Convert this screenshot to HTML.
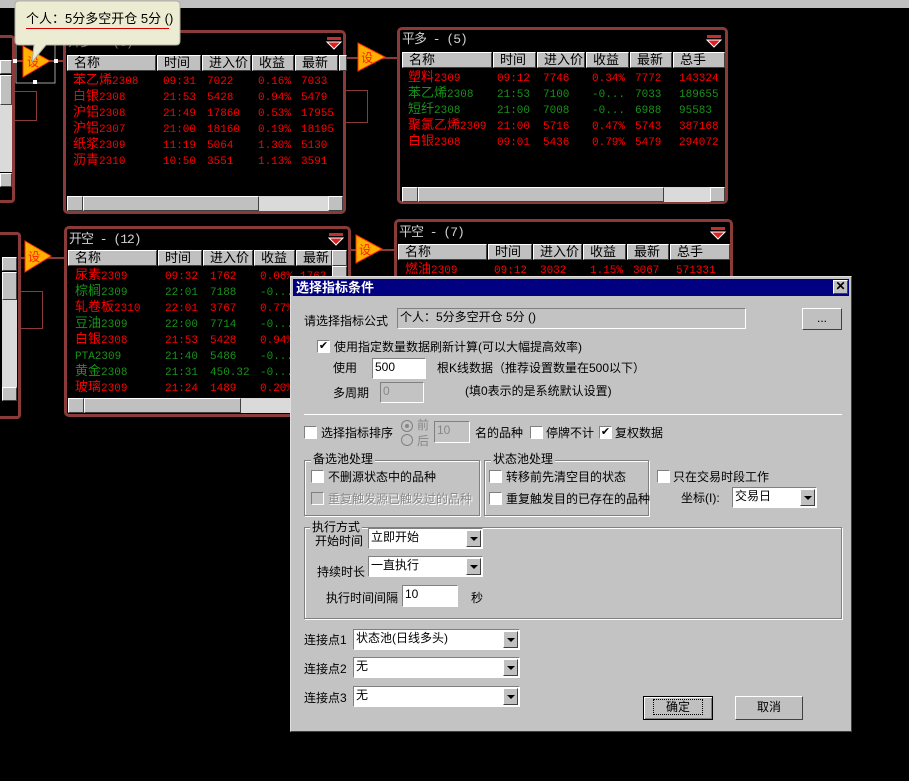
<!DOCTYPE html>
<html><head><meta charset="utf-8">
<style>
*{margin:0;padding:0;box-sizing:border-box}
body{width:909px;height:781px;background:#000;position:relative;overflow:hidden;font-family:"Liberation Sans","Noto Sans CJK SC",sans-serif;font-size:12px}
.a{position:absolute}
.pn{position:absolute;background:#000;border:3px solid #8b3a3a;border-radius:5px}
.tt{position:absolute;color:#d0d0d0;font-size:13px;line-height:16px;font-family:"Liberation Mono","Noto Sans CJK SC",monospace;letter-spacing:-1px}
.hc{position:absolute;height:16px;background:#c0c0c0;border-top:1px solid #fff;border-left:1px solid #fff;border-right:1px solid #404040;border-bottom:1px solid #404040;color:#000;font-size:13px;line-height:14px;padding-left:6px;overflow:hidden;white-space:nowrap}
.r{position:absolute;left:0;height:16px;width:100%;font-family:"Liberation Mono","Noto Sans CJK SC",monospace;font-size:11px;line-height:16px;white-space:nowrap}
.r span{position:absolute;top:3px;height:16px;display:flex;align-items:center}
.r b{font-weight:normal;font-size:13px;font-family:"Noto Sans CJK SC",sans-serif;line-height:16px;height:16px;position:relative;top:-3px}
.R{color:#ff0000}.G{color:#1a921a}
.hs{position:absolute;height:15px;background:#dadada}
.btn{position:absolute;background:#c0c0c0;border-top:1px solid #fff;border-left:1px solid #fff;border-right:1px solid #404040;border-bottom:1px solid #404040}
.lnk{position:absolute;background:#8b3a3a}
.dlg{position:absolute;left:290px;top:276px;width:562px;height:456px;background:#c3c3c3;border-top:1px solid #e0e0e0;border-left:1px solid #e0e0e0;border-right:1px solid #404040;border-bottom:1px solid #404040;font-family:"Liberation Sans","Noto Sans CJK SC",sans-serif;font-size:12px;color:#000}
.d{position:absolute;white-space:nowrap;line-height:14px}
.sk{position:absolute;border-top:1px solid #808080;border-left:1px solid #808080;border-right:1px solid #fff;border-bottom:1px solid #fff;background:#fff;line-height:16px;padding-left:2px;font-size:12px}
.cb{position:absolute;width:13px;height:13px;background:#fff;border-top:1px solid #808080;border-left:1px solid #808080;border-right:1px solid #fff;border-bottom:1px solid #fff;font-size:11px;line-height:11px;text-align:center}
.gb{position:absolute;border:1px solid #808080;box-shadow:1px 1px 0 #fff inset,1px 1px 0 #fff}
.gt{position:absolute;background:#c3c3c3;padding:0 2px;line-height:14px}
.dd{position:absolute;right:1px;top:1px;width:15px;bottom:1px;background:#c0c0c0;border-top:1px solid #fff;border-left:1px solid #fff;border-right:1px solid #404040;border-bottom:1px solid #404040}
.dd:after{content:"";position:absolute;left:3px;top:6px;border-left:4px solid transparent;border-right:4px solid transparent;border-top:4px solid #000}
</style></head><body>

<div class="a" style="left:0;top:0;width:909px;height:8px;background:#c0c0c0"></div>

<div class="a" style="left:0;top:35px;width:15px;height:168px;border-right:3px solid #8b3a3a;border-bottom:3px solid #8b3a3a;border-top:3px solid #8b3a3a;border-radius:0 4px 4px 0"></div>
<div class="btn" style="left:0;top:60px;width:12px;height:14px"></div>
<div class="btn" style="left:0;top:75px;width:12px;height:30px"></div>
<div class="a" style="left:0;top:105px;width:12px;height:67px;background:#dadada"></div>
<div class="btn" style="left:0;top:173px;width:12px;height:14px"></div>
<div class="lnk" style="left:15px;top:91px;width:22px;height:1px"></div><div class="lnk" style="left:36px;top:91px;width:1px;height:30px"></div><div class="lnk" style="left:15px;top:120px;width:22px;height:1px"></div>

<div class="a" style="left:0;top:232px;width:21px;height:187px;border-right:3px solid #8b3a3a;border-bottom:3px solid #8b3a3a;border-top:3px solid #8b3a3a;border-radius:0 4px 4px 0"></div>
<div class="btn" style="left:2px;top:257px;width:15px;height:14px"></div>
<div class="btn" style="left:2px;top:272px;width:15px;height:28px"></div>
<div class="a" style="left:2px;top:300px;width:15px;height:92px;background:#dadada"></div>
<div class="btn" style="left:2px;top:387px;width:15px;height:14px"></div>
<div class="lnk" style="left:21px;top:291px;width:22px;height:1px"></div><div class="lnk" style="left:42px;top:291px;width:1px;height:38px"></div><div class="lnk" style="left:21px;top:328px;width:22px;height:1px"></div>

<div class="lnk" style="left:345px;top:57px;width:52px;height:2px"></div>
<div class="lnk" style="left:345px;top:90px;width:23px;height:1px"></div><div class="lnk" style="left:367px;top:90px;width:1px;height:33px"></div><div class="lnk" style="left:345px;top:122px;width:23px;height:1px"></div>
<div class="lnk" style="left:351px;top:249px;width:44px;height:2px"></div>
<div class="lnk" style="left:12px;top:60px;width:52px;height:2px"></div>
<div class="lnk" style="left:18px;top:257px;width:47px;height:2px"></div>

<svg class="a" style="left:0;top:0" width="909" height="300">
 <g font-family="Noto Sans CJK SC" font-size="12" fill="#ff2000">
  <polygon points="23,46 50,61 23,77" fill="#ffb000" stroke="#ff3000" stroke-width="1"/><text x="27" y="66">设</text>
  <polygon points="358,43 385,57 358,71" fill="#ffb000" stroke="#ff3000" stroke-width="1"/><text x="361" y="62">设</text>
  <polygon points="25,241 51,256 25,272" fill="#ffb000" stroke="#ff3000" stroke-width="1"/><text x="28" y="261">设</text>
  <polygon points="356,235 382,249 356,263" fill="#ffb000" stroke="#ff3000" stroke-width="1"/><text x="359" y="254">设</text>
 </g>
 <rect x="16" y="39" width="39" height="44" fill="none" stroke="#a0a0a0"/>
 <rect x="13" y="59" width="4" height="4" fill="#fff"/><rect x="54" y="59" width="4" height="4" fill="#fff"/><rect x="33" y="80" width="4" height="4" fill="#fff"/>
</svg>

<!-- Panel 1 开多 -->
<div class="pn" style="left:63px;top:30px;width:283px;height:184px">
 <div class="tt" style="left:2px;top:2px;color:#707070">开多 - (6)</div>
 <div class="hc" style="left:1px;top:22px;width:89px">名称</div><div class="hc" style="left:91px;top:22px;width:44px">时间</div><div class="hc" style="left:136px;top:22px;width:49px">进入价</div><div class="hc" style="left:186px;top:22px;width:42px">收益</div><div class="hc" style="left:229px;top:22px;width:43px">最新</div><div class="hc" style="left:273px;top:22px;width:4px"></div>
 <div class="r R" style="top:38px"><span style="left:7px"><b>苯乙烯</b>2308</span><span style="left:97px">09:31</span><span style="left:141px">7022</span><span style="left:192px">0.16%</span><span style="left:235px">7033</span></div>
 <div class="r R" style="top:54px"><span style="left:7px"><b>白银</b>2308</span><span style="left:97px">21:53</span><span style="left:141px">5428</span><span style="left:192px">0.94%</span><span style="left:235px">5479</span></div>
 <div class="r R" style="top:70px"><span style="left:7px"><b>沪铝</b>2308</span><span style="left:97px">21:49</span><span style="left:141px">17860</span><span style="left:192px">0.53%</span><span style="left:235px">17955</span></div>
 <div class="r R" style="top:86px"><span style="left:7px"><b>沪铝</b>2307</span><span style="left:97px">21:00</span><span style="left:141px">18160</span><span style="left:192px">0.19%</span><span style="left:235px">18195</span></div>
 <div class="r R" style="top:102px"><span style="left:7px"><b>纸浆</b>2309</span><span style="left:97px">11:19</span><span style="left:141px">5064</span><span style="left:192px">1.30%</span><span style="left:235px">5130</span></div>
 <div class="r R" style="top:118px"><span style="left:7px"><b>沥青</b>2310</span><span style="left:97px">10:50</span><span style="left:141px">3551</span><span style="left:192px">1.13%</span><span style="left:235px">3591</span></div>
 <div class="hs" style="left:1px;top:163px;width:276px"></div>
 <div class="btn" style="left:1px;top:163px;width:16px;height:15px"></div><div class="btn" style="left:17px;top:163px;width:176px;height:15px"></div><div class="btn" style="left:262px;top:163px;width:15px;height:15px"></div>
</div>

<!-- Panel 2 平多 -->
<div class="pn" style="left:397px;top:27px;width:331px;height:177px">
 <div class="tt" style="left:2px;top:2px">平多 - (5)</div>
 <div class="hc" style="left:2px;top:22px;width:90px">名称</div><div class="hc" style="left:93px;top:22px;width:43px">时间</div><div class="hc" style="left:137px;top:22px;width:48px">进入价</div><div class="hc" style="left:186px;top:22px;width:43px">收益</div><div class="hc" style="left:230px;top:22px;width:42px">最新</div><div class="hc" style="left:273px;top:22px;width:52px">总手</div>
 <div class="r R" style="top:38px"><span style="left:8px"><b>塑料</b>2309</span><span style="left:97px">09:12</span><span style="left:143px">7746</span><span style="left:192px">0.34%</span><span style="left:235px">7772</span><span style="left:279px">143324</span></div>
 <div class="r G" style="top:54px"><span style="left:8px"><b>苯乙烯</b>2308</span><span style="left:97px">21:53</span><span style="left:143px">7100</span><span style="left:192px">-0...</span><span style="left:235px">7033</span><span style="left:279px">189655</span></div>
 <div class="r G" style="top:70px"><span style="left:8px"><b>短纤</b>2308</span><span style="left:97px">21:00</span><span style="left:143px">7008</span><span style="left:192px">-0...</span><span style="left:235px">6988</span><span style="left:279px">95583</span></div>
 <div class="r R" style="top:86px"><span style="left:8px"><b>聚氯乙烯</b>2309</span><span style="left:97px">21:00</span><span style="left:143px">5716</span><span style="left:192px">0.47%</span><span style="left:235px">5743</span><span style="left:279px">387168</span></div>
 <div class="r R" style="top:102px"><span style="left:8px"><b>白银</b>2308</span><span style="left:97px">09:01</span><span style="left:143px">5436</span><span style="left:192px">0.79%</span><span style="left:235px">5479</span><span style="left:279px">294072</span></div>
 <div class="hs" style="left:2px;top:157px;width:323px"></div>
 <div class="btn" style="left:2px;top:157px;width:16px;height:15px"></div><div class="btn" style="left:18px;top:157px;width:246px;height:15px"></div><div class="btn" style="left:310px;top:157px;width:15px;height:15px"></div>
</div>

<!-- Panel 3 开空 -->
<div class="pn" style="left:64px;top:226px;width:287px;height:191px">
 <div class="tt" style="left:2px;top:3px">开空 - (12)</div>
 <div class="hc" style="left:1px;top:21px;width:89px">名称</div><div class="hc" style="left:91px;top:21px;width:44px">时间</div><div class="hc" style="left:136px;top:21px;width:50px">进入价</div><div class="hc" style="left:187px;top:21px;width:41px">收益</div><div class="hc" style="left:229px;top:21px;width:36px">最新</div>
 <div class="r R" style="top:37px"><span style="left:8px"><b>尿素</b>2309</span><span style="left:98px">09:32</span><span style="left:143px">1762</span><span style="left:193px">0.06%</span><span style="left:233px">1763</span></div>
 <div class="r G" style="top:53px"><span style="left:8px"><b>棕榈</b>2309</span><span style="left:98px">22:01</span><span style="left:143px">7188</span><span style="left:193px">-0...</span></div>
 <div class="r R" style="top:69px"><span style="left:8px"><b>轧卷板</b>2310</span><span style="left:98px">22:01</span><span style="left:143px">3767</span><span style="left:193px">0.77%</span></div>
 <div class="r G" style="top:85px"><span style="left:8px"><b>豆油</b>2309</span><span style="left:98px">22:00</span><span style="left:143px">7714</span><span style="left:193px">-0...</span></div>
 <div class="r R" style="top:101px"><span style="left:8px"><b>白银</b>2308</span><span style="left:98px">21:53</span><span style="left:143px">5428</span><span style="left:193px">0.94%</span></div>
 <div class="r G" style="top:117px"><span style="left:8px">PTA2309</span><span style="left:98px">21:40</span><span style="left:143px">5486</span><span style="left:193px">-0...</span></div>
 <div class="r G" style="top:133px"><span style="left:8px"><b>黄金</b>2308</span><span style="left:98px">21:31</span><span style="left:143px">450.32</span><span style="left:193px">-0...</span></div>
 <div class="r R" style="top:149px"><span style="left:8px"><b>玻璃</b>2309</span><span style="left:98px">21:24</span><span style="left:143px">1489</span><span style="left:193px">0.20%</span></div>
 <div class="a" style="left:265px;top:21px;width:15px;height:148px;background:#dadada"></div>
 <div class="btn" style="left:265px;top:21px;width:15px;height:16px"></div><div class="btn" style="left:265px;top:37px;width:15px;height:20px"></div>
 <div class="hs" style="left:1px;top:169px;width:279px"></div>
 <div class="btn" style="left:1px;top:169px;width:16px;height:15px"></div><div class="btn" style="left:17px;top:169px;width:157px;height:15px"></div>
</div>

<!-- Panel 4 平空 -->
<div class="pn" style="left:394px;top:219px;width:339px;height:200px">
 <div class="tt" style="left:2px;top:3px">平空 - (7)</div>
 <div class="hc" style="left:1px;top:22px;width:89px">名称</div><div class="hc" style="left:91px;top:22px;width:44px">时间</div><div class="hc" style="left:136px;top:22px;width:49px">进入价</div><div class="hc" style="left:186px;top:22px;width:43px">收益</div><div class="hc" style="left:230px;top:22px;width:42px">最新</div><div class="hc" style="left:273px;top:22px;width:60px">总手</div>
 <div class="r R" style="top:38px"><span style="left:8px"><b>燃油</b>2309</span><span style="left:97px">09:12</span><span style="left:143px">3032</span><span style="left:193px">1.15%</span><span style="left:236px">3067</span><span style="left:279px">571331</span></div>
</div>

<svg class="a" style="left:0;top:0" width="909" height="260">
 <g><rect x="707" y="35" width="14" height="3" fill="#c03030"/><polygon points="707,40 721,40 714,47" fill="#e02020" stroke="#fff" stroke-width="1"/></g>
 <g><rect x="327" y="37" width="14" height="3" fill="#c03030"/><polygon points="327,42 341,42 334,49" fill="#e02020" stroke="#fff" stroke-width="1"/></g>
 <g><rect x="329" y="233" width="14" height="3" fill="#c03030"/><polygon points="329,238 343,238 336,245" fill="#e02020" stroke="#fff" stroke-width="1"/></g>
 <g><rect x="711" y="227" width="14" height="3" fill="#c03030"/><polygon points="711,232 725,232 718,239" fill="#e02020" stroke="#fff" stroke-width="1"/></g>
</svg>

<svg class="a" style="left:0;top:0" width="200" height="70">
 <path d="M19,1 H176 Q180,1 180,5 V41 Q180,45 176,45 H46 L32,62 L34,45 H19 Q15,45 15,41 V5 Q15,1 19,1 Z" fill="#ececd2" stroke="#b0b0a0"/>
 <rect x="26" y="28" width="143" height="1" fill="#d00000"/>
</svg>
<div class="d" style="left:26px;top:12px;font-size:13px;font-family:'Liberation Sans','Noto Sans CJK SC',sans-serif">个人：5分多空开仓 5分 ()</div>

<div class="dlg">
 <div class="a" style="left:2px;top:2px;width:556px;height:17px;background:#000080"></div>
 <div class="d" style="left:5px;top:3px;color:#fff;font-weight:bold;font-size:13px;line-height:15px">选择指标条件</div>
 <div class="btn" style="left:542px;top:3px;width:15px;height:14px;font-size:12px;line-height:11px;text-align:center;font-weight:bold">✕</div>

 <div class="d" style="left:13px;top:37px">请选择指标公式</div>
 <div class="sk" style="left:106px;top:31px;width:349px;height:21px;background:#c3c3c3">个人：5分多空开仓 5分 ()</div>
 <div class="btn" style="left:511px;top:31px;width:40px;height:22px;text-align:center;line-height:18px">...</div>

 <div class="cb" style="left:26px;top:63px">✔</div>
 <div class="d" style="left:43px;top:63px">使用指定数量数据刷新计算(可以大幅提高效率)</div>
 <div class="d" style="left:42px;top:84px">使用</div>
 <div class="sk" style="left:81px;top:81px;width:54px;height:21px">500</div>
 <div class="d" style="left:146px;top:84px">根K线数据（推荐设置数量在500以下）</div>
 <div class="d" style="left:42px;top:109px">多周期</div>
 <div class="sk" style="left:89px;top:105px;width:44px;height:21px;background:#c3c3c3;color:#888">0</div>
 <div class="d" style="left:174px;top:107px">(填0表示的是系统默认设置)</div>

 <div class="a" style="left:13px;top:137px;width:538px;height:1px;background:#808080;border-bottom:1px solid #fff"></div>

 <div class="cb" style="left:13px;top:149px"></div>
 <div class="d" style="left:30px;top:149px">选择指标排序</div>
 <div class="a" style="left:110px;top:143px;width:12px;height:12px;border-radius:6px;background:#c3c3c3;border:1px solid #808080"><div class="a" style="left:3px;top:3px;width:4px;height:4px;border-radius:2px;background:#888"></div></div>
 <div class="a" style="left:110px;top:157px;width:12px;height:12px;border-radius:6px;background:#c3c3c3;border:1px solid #808080"></div>
 <div class="d" style="left:126px;top:141px;color:#888">前</div>
 <div class="d" style="left:126px;top:157px;color:#888">后</div>
 <div class="sk" style="left:143px;top:144px;width:36px;height:22px;background:#c3c3c3;color:#888">10</div>
 <div class="d" style="left:184px;top:149px">名的品种</div>
 <div class="cb" style="left:239px;top:149px"></div>
 <div class="d" style="left:255px;top:149px">停牌不计</div>
 <div class="cb" style="left:308px;top:149px">✔</div>
 <div class="d" style="left:324px;top:149px">复权数据</div>

 <div class="gb" style="left:13px;top:183px;width:176px;height:56px"></div>
 <div class="gt" style="left:20px;top:175px">备选池处理</div>
 <div class="cb" style="left:20px;top:193px"></div><div class="d" style="left:37px;top:193px">不删源状态中的品种</div>
 <div class="cb" style="left:20px;top:215px;background:#c3c3c3"></div><div class="d" style="left:37px;top:215px;color:#888;text-shadow:1px 1px 0 #fff">重复触发源已触发过的品种</div>

 <div class="gb" style="left:193px;top:183px;width:165px;height:56px"></div>
 <div class="gt" style="left:200px;top:175px">状态池处理</div>
 <div class="cb" style="left:198px;top:193px"></div><div class="d" style="left:215px;top:193px">转移前先清空目的状态</div>
 <div class="cb" style="left:198px;top:215px"></div><div class="d" style="left:215px;top:215px">重复触发目的已存在的品种</div>

 <div class="cb" style="left:366px;top:193px"></div><div class="d" style="left:382px;top:193px">只在交易时段工作</div>
 <div class="d" style="left:390px;top:214px">坐标(I):</div>
 <div class="sk" style="left:441px;top:210px;width:85px;height:21px">交易日<div class="dd"></div></div>

 <div class="gb" style="left:13px;top:250px;width:538px;height:92px"></div>
 <div class="gt" style="left:19px;top:243px">执行方式</div>
 <div class="d" style="left:24px;top:257px">开始时间</div>
 <div class="sk" style="left:77px;top:251px;width:115px;height:21px">立即开始<div class="dd"></div></div>
 <div class="d" style="left:26px;top:288px">持续时长</div>
 <div class="sk" style="left:77px;top:279px;width:115px;height:21px">一直执行<div class="dd"></div></div>
 <div class="d" style="left:35px;top:314px">执行时间间隔</div>
 <div class="sk" style="left:111px;top:308px;width:56px;height:22px">10</div>
 <div class="d" style="left:180px;top:314px">秒</div>

 <div class="d" style="left:13px;top:356px">连接点1</div>
 <div class="sk" style="left:62px;top:352px;width:167px;height:21px">状态池(日线多头)<div class="dd"></div></div>
 <div class="d" style="left:13px;top:385px">连接点2</div>
 <div class="sk" style="left:62px;top:380px;width:167px;height:21px">无<div class="dd"></div></div>
 <div class="d" style="left:13px;top:414px">连接点3</div>
 <div class="sk" style="left:62px;top:409px;width:167px;height:21px">无<div class="dd"></div></div>

 <div class="btn" style="left:352px;top:419px;width:70px;height:24px;border:1px solid #000;box-shadow:inset 1px 1px 0 #fff,inset -1px -1px 0 #808080;text-align:center;line-height:20px"><span style="outline:1px dotted #000;padding:0 12px">确定</span></div>
 <div class="btn" style="left:444px;top:419px;width:68px;height:24px;text-align:center;line-height:21px">取消</div>
</div>
</body></html>
